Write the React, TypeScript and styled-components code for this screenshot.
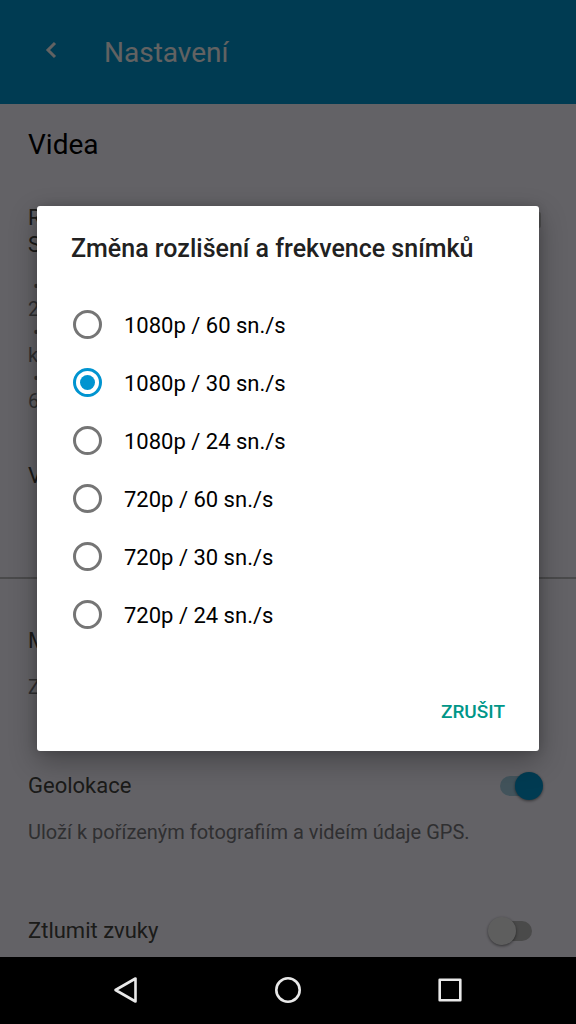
import React, { useState } from "react";
import styled, { createGlobalStyle } from "styled-components";

const GlobalStyle = createGlobalStyle`
  * { box-sizing: border-box; }
  body { margin: 0; background: #000; }
  body, button, input { font-family: Roboto, "Noto Sans", sans-serif; }
  h1, h2, p { margin: 0; padding: 0; font-weight: 400; }
`;

const Phone = styled.div`
  display: flex;
  flex-direction: column;
  height: 100vh;
`;

const Screen = styled.div`
  position: relative;
  flex: 1;
  min-height: 0;
  overflow: hidden;
  background: #f8f5ff;
`;

const AppBar = styled.header`
  display: flex;
  align-items: center;
  gap: 40px;
  height: 104px;
  padding: 0 40px;
  background: #0094cd;
  color: #f5f5f5;
`;

const BackButton = styled.button`
  display: flex;
  width: 24px;
  height: 24px;
  margin-bottom: 4px;
  padding: 0;
  border: 0;
  background: none;
  color: inherit;
`;

const AppTitle = styled.h1`
  padding-top: 2px;
  font-size: 28px;
  line-height: 32px;
`;

const SectionTitle = styled.h2`
  padding: 24px 28px 42px;
  font-size: 28px;
  line-height: 34px;
  color: #000;
`;

const Setting = styled.section<{ $space: number }>`
  display: flex;
  justify-content: space-between;
  align-items: flex-start;
  padding: 0 28px;
  margin-bottom: ${(p) => p.$space}px;
`;

const Label = styled.label`
  display: block;
  white-space: pre-line;
  font-size: 22px;
  line-height: 27px;
  color: #44443f;
`;

const Summary = styled.p<{ $gap: number }>`
  margin-top: ${(p) => p.$gap}px;
  white-space: pre-wrap;
  font-size: 20px;
  line-height: 23px;
  color: #77777b;
`;

const Divider = styled.hr`
  height: 2px;
  margin: 0 0 48px;
  border: 0;
  background: #bab8bc;
`;

const MoreButton = styled.button`
  width: 16px;
  height: 16px;
  margin: 8px 7px 0 0;
  padding: 0;
  border: 0;
  border-radius: 2px;
  background: #c4c2c6;
`;

const Switch = styled.input`
  appearance: none;
  position: relative;
  flex: none;
  width: 32px;
  height: 20px;
  margin: 4px 16px 0 0;
  border-radius: 10px;
  background: #b8b8b8;

  &::before {
    content: "";
    position: absolute;
    top: -4px;
    left: -12px;
    width: 28px;
    height: 28px;
    border-radius: 50%;
    background: #ececec;
    box-shadow: 0 1px 3px rgba(0, 0, 0, 0.5);
  }
  &:checked { background: #a5cfe4; }
  &:checked::before { left: 15px; background: #0094cd; }
`;

const Scrim = styled.div`
  position: absolute;
  inset: 0;
  display: flex;
  align-items: center;
  padding: 0 37px;
  background: rgba(0, 0, 0, 0.6);
`;

const Dialog = styled.form`
  flex: 1;
  padding: 27px 34px 21px;
  border-radius: 3px;
  background: #fff;
  box-shadow: 0 10px 28px rgba(0, 0, 0, 0.3), 0 0 10px rgba(0, 0, 0, 0.15);
`;

const DialogTitle = styled.h2`
  margin-bottom: 32px;
  font-size: 25px;
  line-height: 32px;
  && { font-weight: 500; }
  color: #212121;
`;

const Option = styled.label`
  display: flex;
  align-items: center;
  gap: 22px;
  height: 58px;
  padding-left: 2px;
  font-size: 22px;
  line-height: 28px;
  color: #000;
`;

const Radio = styled.input`
  appearance: none;
  display: grid;
  place-items: center;
  width: 29px;
  height: 29px;
  margin: 0 0 3px;
  border: 3px solid #757575;
  border-radius: 50%;

  &:checked { border-color: #0094d0; }
  &:checked::before {
    content: "";
    width: 15px;
    height: 15px;
    border-radius: 50%;
    background: #0094d0;
  }
`;

const Actions = styled.div`
  display: flex;
  justify-content: flex-end;
  margin-top: 49px;
`;

const TextButton = styled.button`
  height: 36px;
  padding: 0;
  border: 0;
  background: none;
  font-size: 19px;
  font-weight: 500;
  line-height: 36px;
  color: #009688;
`;

const NavBar = styled.nav`
  display: flex;
  justify-content: center;
  align-items: center;
  gap: 130px;
  height: 67px;
  padding-bottom: 1px;
  background: #000;
`;

const NavButton = styled.button`
  display: flex;
  padding: 0;
  border: 0;
  background: none;
`;

const options = [
  "1080p / 60 sn./s",
  "1080p / 30 sn./s",
  "1080p / 24 sn./s",
  "720p / 60 sn./s",
  "720p / 30 sn./s",
  "720p / 24 sn./s",
];

const NavIcon = ({ children }: { children: React.ReactNode }) => (
  <svg width="32" height="32" viewBox="0 0 32 32" fill="none" stroke="#e8e8e8" strokeWidth="2.6" strokeLinejoin="round">
    {children}
  </svg>
);

export default function App() {
  const [selected, setSelected] = useState(options[1]);
  return (
    <>
      <GlobalStyle />
      <Phone>
        <Screen>
          <AppBar>
            <BackButton aria-label="Zpět">
              <svg width="24" height="24" viewBox="0 0 24 24" fill="none" stroke="currentColor" strokeWidth="3">
                <path d="M15 5 L8 12 L15 19" />
              </svg>
            </BackButton>
            <AppTitle>Nastavení</AppTitle>
          </AppBar>
          <SectionTitle>Videa</SectionTitle>
          <Setting $space={49}>
            <div>
              <Label as="p">{"R\nS"}</Label>
              <Summary $gap={17}>{" •\n2\n •\nk\n •\n6"}</Summary>
            </div>
            <MoreButton type="button" aria-label="Změnit" />
          </Setting>
          <Setting $space={88}>
            <Label as="p">V</Label>
          </Setting>
          <Divider />
          <Setting $space={73}>
            <div>
              <Label as="p">M</Label>
              <Summary $gap={22}>Z</Summary>
            </div>
          </Setting>
          <Setting $space={73}>
            <div>
              <Label htmlFor="geo">Geolokace</Label>
              <Summary $gap={22}>Uloží k pořízeným fotografiím a videím údaje GPS.</Summary>
            </div>
            <Switch id="geo" type="checkbox" defaultChecked />
          </Setting>
          <Setting $space={0}>
            <Label htmlFor="mute">Ztlumit zvuky</Label>
            <Switch id="mute" type="checkbox" />
          </Setting>
          <Scrim>
            <Dialog role="dialog" aria-labelledby="dialog-title">
              <DialogTitle id="dialog-title">Změna rozlišení a frekvence snímků</DialogTitle>
              {options.map((o) => (
                <Option key={o}>
                  <Radio type="radio" name="resolution" checked={o === selected} onChange={() => setSelected(o)} />
                  {o}
                </Option>
              ))}
              <Actions>
                <TextButton type="button">ZRUŠIT</TextButton>
              </Actions>
            </Dialog>
          </Scrim>
        </Screen>
        <NavBar>
          <NavButton aria-label="Zpět">
            <NavIcon><path d="M25.500 4.500 V27.500 L5.500 16 Z" /></NavIcon>
          </NavButton>
          <NavButton aria-label="Domů">
            <NavIcon><circle cx="16" cy="16" r="11.700" /></NavIcon>
          </NavButton>
          <NavButton aria-label="Přehled">
            <NavIcon><rect x="5.700" y="5.700" width="20.600" height="20.600" /></NavIcon>
          </NavButton>
        </NavBar>
      </Phone>
    </>
  );
}
